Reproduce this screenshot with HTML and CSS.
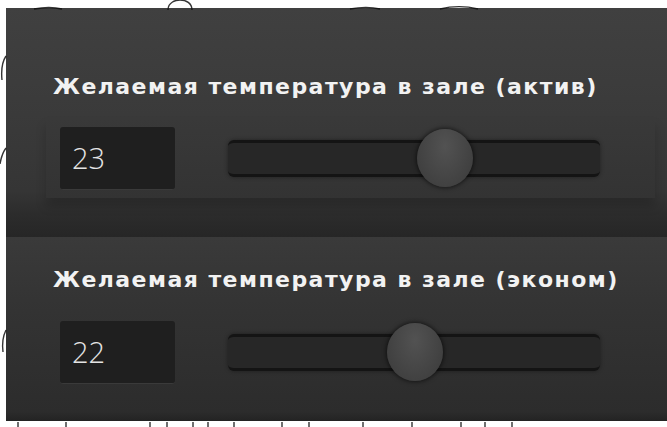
FILE: index.html
```html
<!DOCTYPE html>
<html lang="ru">
<head>
<meta charset="utf-8">
<title>Температура</title>
<link rel="stylesheet" href="styles.css">
</head>
<body>
  <div class="panel">
    <section class="zone zone-active">
      <h2 class="zone-title">Желаемая температура в зале (актив)</h2>
      <div class="zone-body">
        <div class="value-box">23</div>
        <div class="slider">
          <div class="slider-track"></div>
          <div class="slider-knob" style="left: 189px"></div>
        </div>
      </div>
    </section>
    <section class="zone zone-eco">
      <h2 class="zone-title">Желаемая температура в зале (эконом)</h2>
      <div class="zone-body">
        <div class="value-box">22</div>
        <div class="slider">
          <div class="slider-track"></div>
          <div class="slider-knob" style="left: 159px"></div>
        </div>
      </div>
    </section>
  </div>
  <!-- cable loops and wire ends sticking out around the panel frame -->
  <svg class="wires" width="667" height="427" viewBox="0 0 667 427" aria-hidden="true">
    <g fill="none" stroke="#111" stroke-width="1.4" opacity="0.85">
      <path d="M168 10 C168 2 176 0 180 0 C186 0 192 3 192 10"/>
      <path d="M34 9 C44 7 54 7 62 9"/>
      <path d="M350 9 C360 7 372 7 380 9"/>
      <path d="M440 9 C452 6 466 6 478 9"/>
      <path d="M6 56 C2 62 1 70 2 80"/>
      <path d="M6 148 C3 152 1 158 0 164"/>
      <path d="M6 330 C3 336 2 344 3 352"/>
      <path d="M18 422 v5 M66 422 v5 M150 422 v5 M167 422 v5 M193 422 v5 M208 422 v5 M234 422 v5 M282 422 v5 M309 422 v5 M363 422 v5 M412 422 v5 M461 422 v5 M485 422 v5 M512 422 v5"/>
    </g>
  </svg>
</body>
</html>
```

FILE: styles.css
```css
html, body {
  margin: 0;
  padding: 0;
  background: #ffffff;
}

body {
  position: relative;
  width: 667px;
  height: 427px;
  overflow: hidden;
}

.panel {
  margin: 8px 0 0 6px;
  width: 661px;
  height: 413px;
  display: flex;
  flex-direction: column;
  background: #333333;
  box-shadow: inset 4px 0 3px rgba(0, 0, 0, 0.35);
}

.zone {
  display: flex;
  flex-direction: column;
}

.zone-active {
  height: 229px;
  background: linear-gradient(#404040, #3b3b3b 40%, #353535 80%, #2c2c2c 90%, #262626);
}

.zone-eco {
  flex: 1;
  background: linear-gradient(#3a3a3a, #333333 40%, #2c2c2c 95%, #232323);
}

.zone-title {
  margin: 0;
  padding: 0 0 0 47px;
  font-family: "DejaVu Sans", Verdana, sans-serif;
  font-weight: bold;
  font-size: 22px;
  letter-spacing: 1.45px;
  line-height: 24px;
  color: #f2f2f2;
  white-space: nowrap;
}

.zone-active .zone-title {
  padding-top: 67px;
}

.zone-eco .zone-title {
  padding-top: 31px;
}

.zone-body {
  display: flex;
  align-items: center;
  gap: 53px;
  margin: 0 12px 0 40px;
  padding: 0 0 0 14px;
}

.zone-active .zone-body {
  margin-top: 19px;
  height: 80px;
  background: linear-gradient(#393939, #333333);
  box-shadow: 0 8px 10px rgba(0, 0, 0, 0.18);
}

.zone-eco .zone-body {
  margin-top: 25px;
  height: 70px;
}

.value-box {
  width: 103px;
  height: 62px;
  padding-left: 12px;
  box-sizing: content-box;
  display: flex;
  align-items: center;
  background: #1f1f1f;
  border-radius: 3px;
  border-bottom: 1px solid #3a3a3a;
  font-family: "Open Sans", "Liberation Sans", sans-serif;
  font-weight: 300;
  font-size: 29px;
  color: #e4e4e4;
}

.slider {
  position: relative;
  width: 372px;
  height: 62px;
  display: flex;
  align-items: center;
}

.slider-track {
  width: 100%;
  height: 31px;
  background: #272727;
  border-top: 3px solid #141414;
  border-bottom: 3px solid #141414;
  border-radius: 6px;
  box-shadow: 0 0 4px rgba(0, 0, 0, 0.4);
}

.slider-knob {
  position: absolute;
  top: 2px;
  width: 56px;
  height: 58px;
  border-radius: 50%;
  background: radial-gradient(ellipse at 50% 30%, #525252, #464646 50%, #3a3a3a);
  box-shadow: 0 0 4px 1px rgba(0, 0, 0, 0.55);
}

.wires {
  position: absolute;
  left: 0;
  top: 0;
  pointer-events: none;
}
```
